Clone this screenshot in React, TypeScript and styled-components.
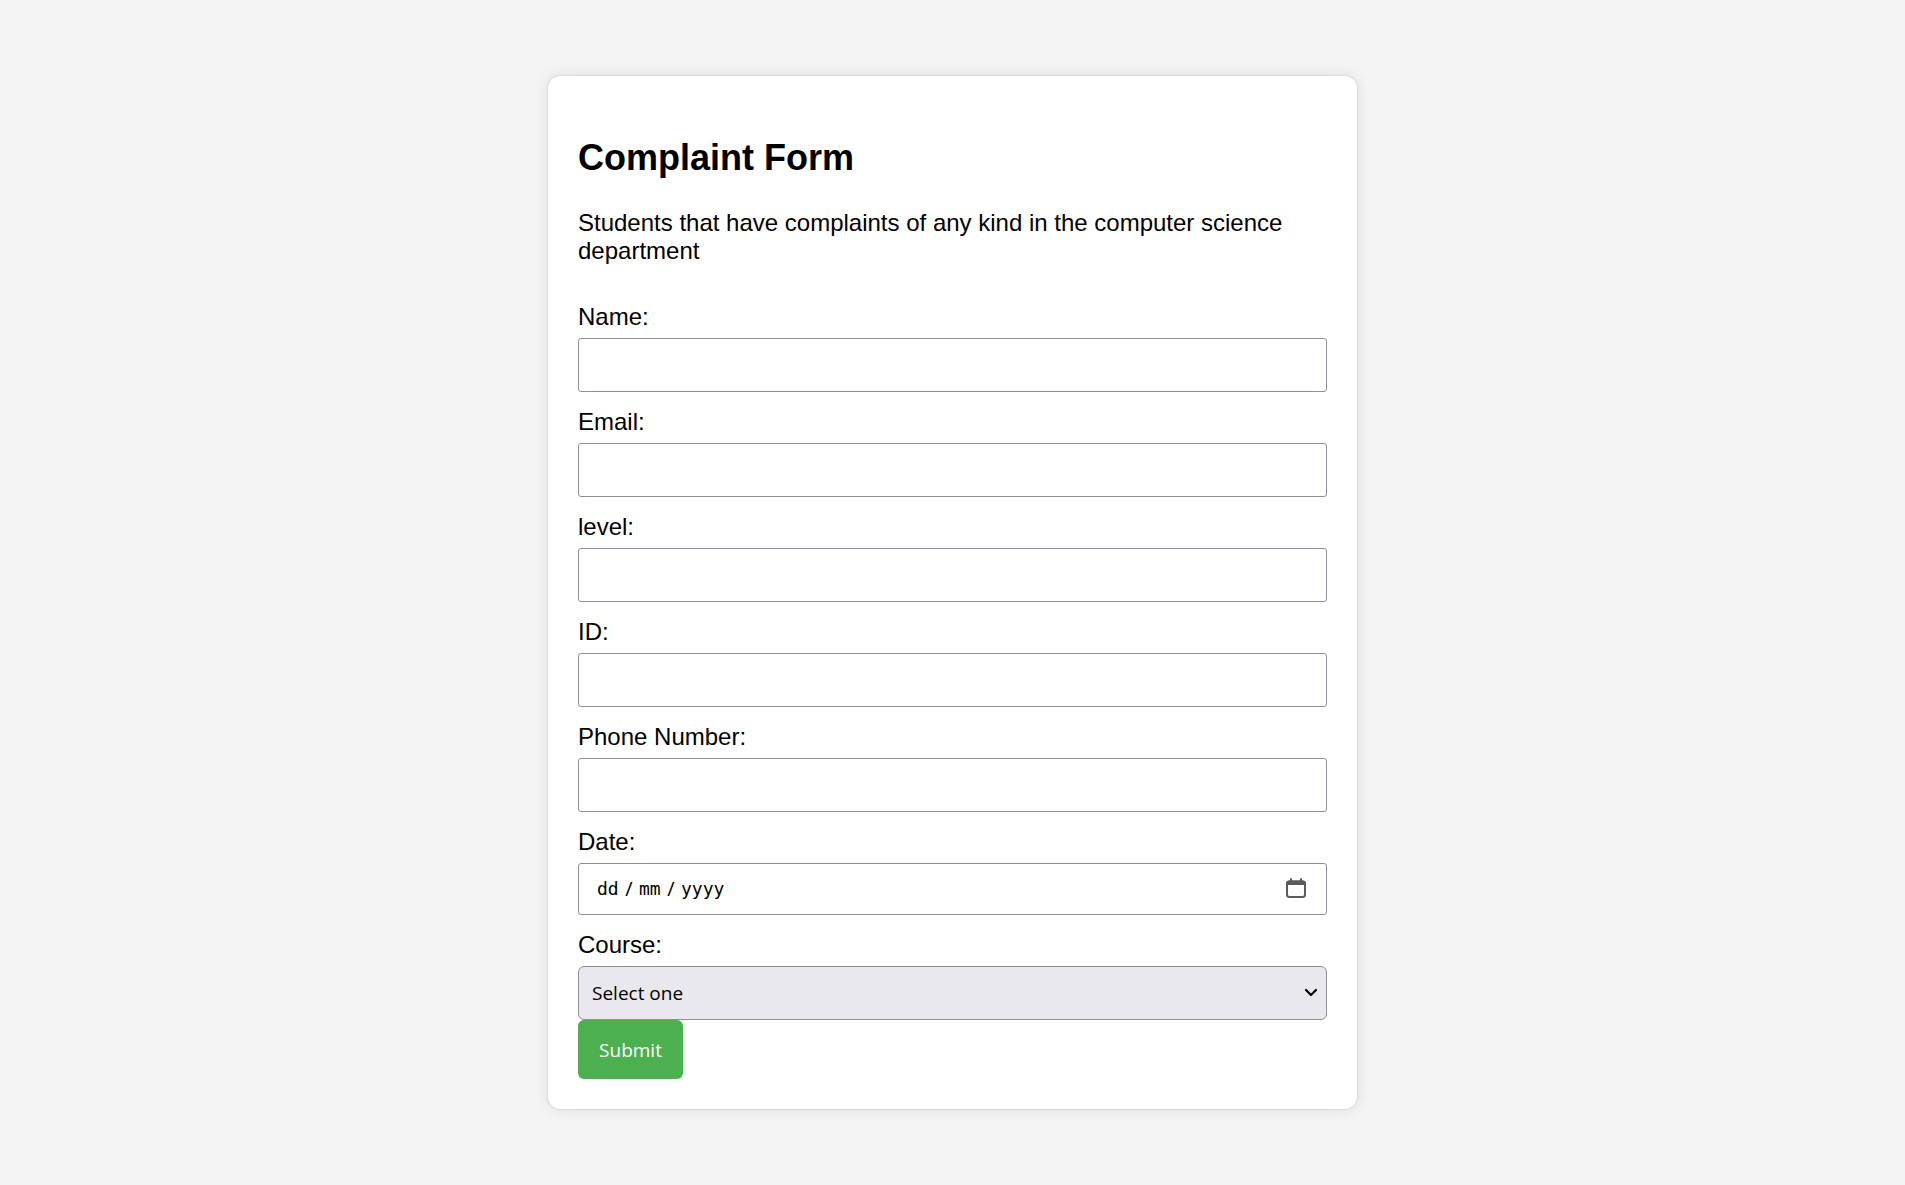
import React from "react";
import styled, { createGlobalStyle } from "styled-components";

const GlobalStyle = createGlobalStyle`
  *, *::before, *::after { box-sizing: border-box; }
  body {
    margin: 0;
    background: #f4f4f4;
    color: #000;
    font-family: "Liberation Sans", Arial, sans-serif;
    font-size: 24px;
    line-height: 28px;
  }
`;

const uiFont = `"Open Sans", "Noto Sans", sans-serif`;

const Page = styled.main`
  min-height: 100vh;
  display: flex;
  align-items: center;
  justify-content: center;
`;

const Card = styled.form`
  width: 100%;
  max-width: 809px;
  padding: 30px;
  background: #fff;
  border-radius: 12px;
  box-shadow: 0 0 15px rgba(0, 0, 0, 0.1), 0 0 2px rgba(0, 0, 0, 0.2);
`;

const Title = styled.h1`
  margin: 31px 0 30px;
  font-size: 36px;
  line-height: 42px;
`;

const Intro = styled.p`
  margin: 0 0 38px;
`;

const Fields = styled.div`
  display: flex;
  flex-direction: column;
  gap: 16px;
`;

const Field = styled.div`
  display: flex;
  flex-direction: column;
  gap: 7px;
`;

const TextInput = styled.input`
  width: 100%;
  height: 54px;
  padding: 0 18px;
  border: 1px solid #8f8f9d;
  border-radius: 3px;
  background: #fff;
  font-family: ${uiFont};
  font-size: 19px;
`;

const DateBox = styled.div`
  display: flex;
  align-items: center;
  height: 52px;
  padding: 0 20px 0 18px;
  border: 1px solid #8f8f9d;
  border-radius: 3px;
  font-family: ${uiFont};
  font-size: 20px;
`;

const DatePart = styled.input<{ $chars: number }>`
  width: ${(p) => p.$chars * 11}px;
  padding: 0;
  border: 0;
  background: transparent;
  font-family: "DejaVu Sans Mono", monospace;
  font-size: 18px;
  line-height: 28px;

  &::placeholder {
    color: #000;
    opacity: 1;
  }
`;

const Slash = styled.span`
  width: 20px;
  text-align: center;
`;

const CalendarButton = styled.button`
  display: flex;
  margin-left: auto;
  padding: 0 0 3px;
  border: 0;
  background: none;
`;

const SelectWrap = styled.div`
  display: grid;
  align-items: center;

  & > * {
    grid-area: 1 / 1;
  }
`;

const Select = styled.select`
  appearance: none;
  width: 100%;
  height: 54px;
  padding: 0 13px;
  border: 1px solid #8f8f9d;
  border-radius: 6px;
  background: #e9e9ed;
  color: #000;
  font-family: ${uiFont};
  font-size: 19px;
`;

const Chevron = styled.svg`
  justify-self: end;
  margin-right: 9px;
  pointer-events: none;
`;

const Submit = styled.button`
  display: block;
  width: 105px;
  height: 59px;
  padding: 0;
  border: 0;
  border-radius: 6px;
  background: #4caf50;
  color: #fff;
  font-family: ${uiFont};
  font-size: 19px;
`;

const textFields = [
  { id: "name", label: "Name:", type: "text" },
  { id: "email", label: "Email:", type: "email" },
  { id: "level", label: "level:", type: "text" },
  { id: "student-id", label: "ID:", type: "text" },
  { id: "phone", label: "Phone Number:", type: "tel" },
];

export default function App() {
  return (
    <>
      <GlobalStyle />
      <Page>
        <Card onSubmit={(e) => e.preventDefault()}>
          <Title>Complaint Form</Title>
          <Intro>
            Students that have complaints of any kind in the computer science
            department
          </Intro>
          <Fields>
            {textFields.map((f) => (
              <Field key={f.id}>
                <label htmlFor={f.id}>{f.label}</label>
                <TextInput id={f.id} name={f.id} type={f.type} />
              </Field>
            ))}
            <Field>
              <label htmlFor="day">Date:</label>
              <DateBox>
                <DatePart id="day" $chars={2} maxLength={2} placeholder="dd" />
                <Slash>/</Slash>
                <DatePart $chars={2} maxLength={2} placeholder="mm" aria-label="Month" />
                <Slash>/</Slash>
                <DatePart $chars={4} maxLength={4} placeholder="yyyy" aria-label="Year" />
                <CalendarButton type="button" aria-label="Open calendar">
                  <svg width="20" height="20" viewBox="0 0 20 20" fill="none">
                    <rect x="1" y="3.5" width="18" height="15.5" rx="2.5" stroke="#5b5b5b" strokeWidth="2" />
                    <path d="M0 7V5.5a3 3 0 0 1 3-3h14a3 3 0 0 1 3 3V7z" fill="#5b5b5b" />
                    <path d="M5 1V4M15 1V4" stroke="#5b5b5b" strokeWidth="2" strokeLinecap="round" />
                  </svg>
                </CalendarButton>
              </DateBox>
            </Field>
            <Field>
              <label htmlFor="course">Course:</label>
              <SelectWrap>
                <Select id="course" name="course">
                  <option>Select one</option>
                </Select>
                <Chevron width="14" height="10" viewBox="0 0 14 10" fill="none">
                  <path d="M2 2l5 5 5-5" stroke="#000" strokeWidth="2.2" strokeLinecap="round" strokeLinejoin="round" />
                </Chevron>
              </SelectWrap>
            </Field>
          </Fields>
          <Submit type="submit">Submit</Submit>
        </Card>
      </Page>
    </>
  );
}
